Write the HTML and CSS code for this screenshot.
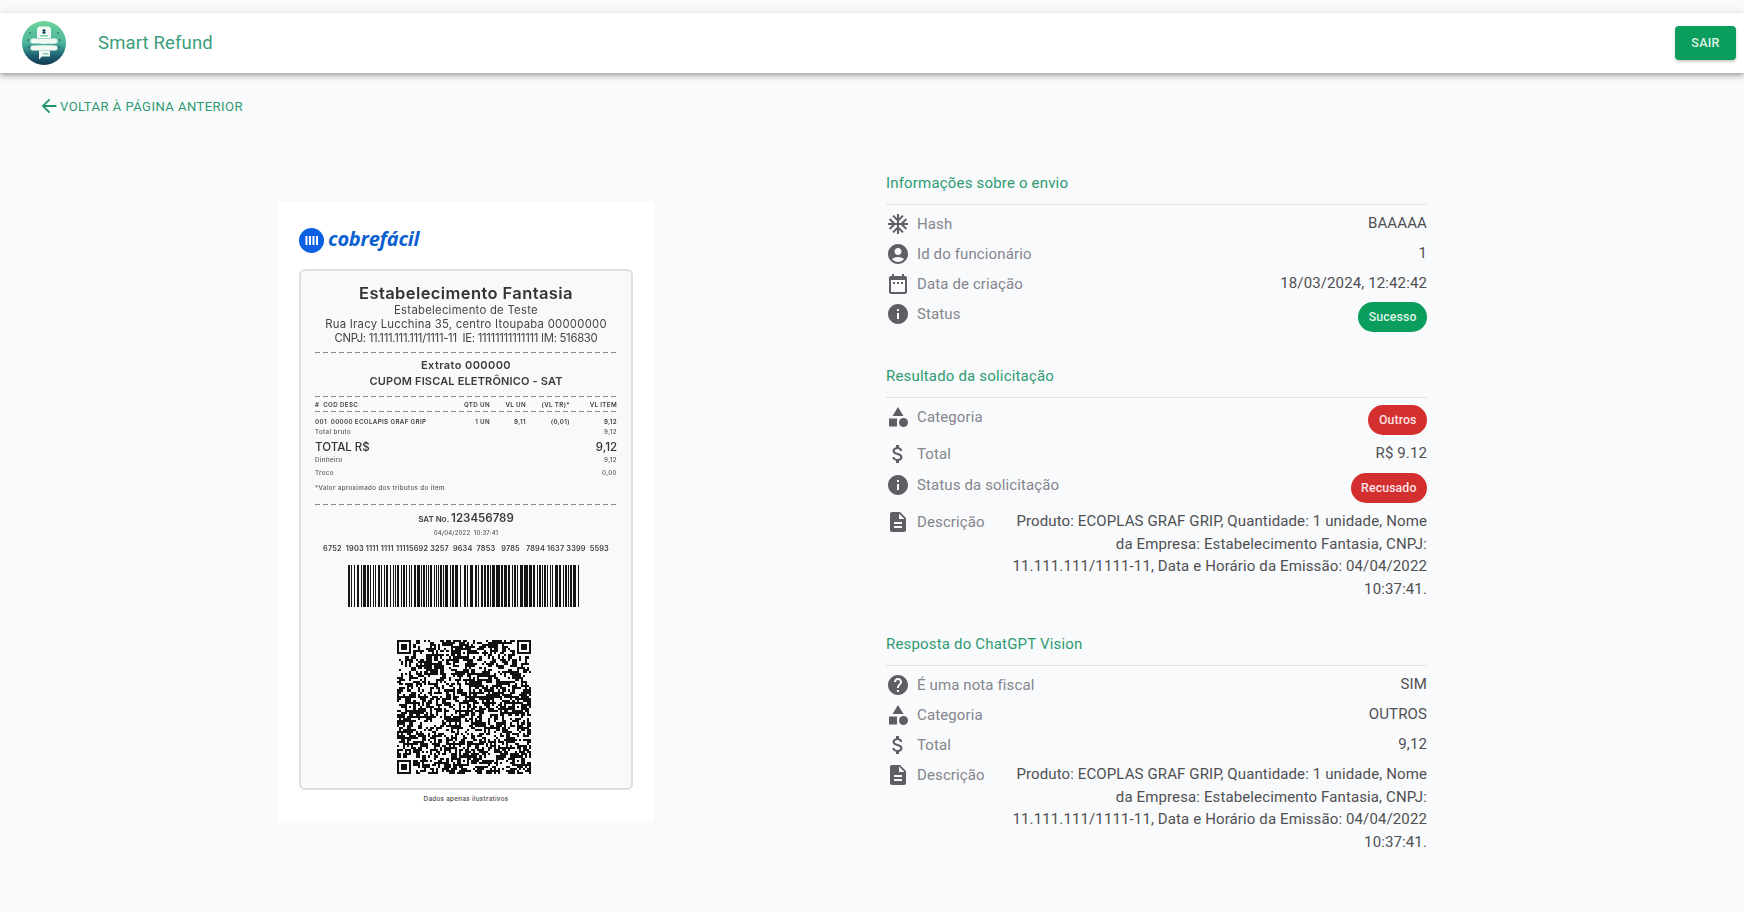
FILE: index.html
```html
<!DOCTYPE html>
<html lang="pt-BR">
<head>
<meta charset="utf-8">
<title>Smart Refund</title>
<link rel="stylesheet" href="styles.css">
</head>
<body>
<svg class="sprite" width="0" height="0" aria-hidden="true">
  <symbol id="i-hash" viewBox="0 0 24 24"><path d="M22 11h-4.17l3.24-3.24-1.41-1.42L15 11h-2V9l4.66-4.66-1.42-1.41L13 6.17V2h-2v4.17L7.76 2.93 6.34 4.34 11 9v2H9L4.34 6.34 2.93 7.76 6.17 11H2v2h4.17l-3.24 3.24 1.41 1.42L9 13h2v2l-4.66 4.66 1.42 1.41L11 17.83V22h2v-4.17l3.24 3.24 1.42-1.41L13 15v-2h2l4.66 4.66 1.41-1.42L17.83 13H22z"/></symbol>
  <symbol id="i-user" viewBox="0 0 24 24"><path d="M12 2C6.48 2 2 6.48 2 12s4.48 10 10 10 10-4.48 10-10S17.52 2 12 2zm0 4c1.93 0 3.5 1.57 3.5 3.5S13.93 13 12 13s-3.5-1.57-3.5-3.5S10.07 6 12 6zm0 14c-2.03 0-4.43-.82-6.14-2.88C7.55 15.8 9.68 15 12 15s4.45.8 6.14 2.12C16.43 19.18 14.03 20 12 20z"/></symbol>
  <symbol id="i-date" viewBox="0 0 24 24"><path d="M19 4h-1V2h-2v2H8V2H6v2H5c-1.11 0-1.99.9-1.99 2L3 20c0 1.1.89 2 2 2h14c1.1 0 2-.9 2-2V6c0-1.1-.9-2-2-2zm0 16H5V8h14v12zM9 12H7v-2h2v2zm4 0h-2v-2h2v2zm4 0h-2v-2h2v2z"/></symbol>
  <symbol id="i-info" viewBox="0 0 24 24"><path d="M12 2C6.48 2 2 6.48 2 12s4.48 10 10 10 10-4.48 10-10S17.52 2 12 2zm1 15h-2v-6h2v6zm0-8h-2V7h2v2z"/></symbol>
  <symbol id="i-cat" viewBox="0 0 24 24"><path d="M12 2l-5.5 9h11z"/><circle cx="17.5" cy="17.5" r="4.5"/><path d="M3 13.5h8v8H3z"/></symbol>
  <symbol id="i-money" viewBox="0 0 24 24"><path d="M11.8 10.9c-2.27-.59-3-1.2-3-2.15 0-1.09 1.01-1.85 2.7-1.85 1.78 0 2.44.85 2.5 2.1h2.21c-.07-1.72-1.12-3.3-3.21-3.81V3h-3v2.16c-1.94.42-3.5 1.68-3.5 3.61 0 2.31 1.91 3.46 4.7 4.13 2.5.6 3 1.48 3 2.41 0 .69-.49 1.79-2.7 1.79-2.06 0-2.87-.92-2.98-2.1h-2.2c.12 2.19 1.76 3.42 3.68 3.83V21h3v-2.15c1.95-.37 3.5-1.5 3.5-3.55 0-2.84-2.43-3.81-4.7-4.4z"/></symbol>
  <symbol id="i-desc" viewBox="0 0 24 24"><path d="M14 2H6c-1.1 0-1.99.9-1.99 2L4 20c0 1.1.89 2 2 2h12c1.1 0 2-.9 2-2V8l-6-6zm2 16H8v-2h8v2zm0-4H8v-2h8v2zm-3-5V3.5L18.5 9H13z"/></symbol>
  <symbol id="i-help" viewBox="0 0 24 24"><path d="M12 2C6.48 2 2 6.48 2 12s4.48 10 10 10 10-4.48 10-10S17.52 2 12 2zm1 17h-2v-2h2v2zm2.07-7.75l-.9.92C13.45 12.9 13 13.5 13 15h-2v-.5c0-1.1.45-2.1 1.17-2.83l1.24-1.26c.37-.36.59-.86.59-1.41 0-1.1-.9-2-2-2s-2 .9-2 2H8c0-2.21 1.79-4 4-4s4 1.79 4 4c0 .88-.36 1.68-.93 2.25z"/></symbol>
</svg>

<header class="topbar">
  <svg class="app-logo" viewBox="0 0 44 44" aria-hidden="true">
    <defs>
      <linearGradient id="logo-bg" x1="0" y1="0" x2="0" y2="1">
        <stop offset="0" stop-color="#6fd39a"/>
        <stop offset=".5" stop-color="#4cb49c"/>
        <stop offset=".78" stop-color="#1f6274"/>
        <stop offset="1" stop-color="#12384c"/>
      </linearGradient>
    </defs>
    <circle cx="22" cy="22" r="22" fill="url(#logo-bg)"/>
    <g fill="#17404f">
      <circle cx="8" cy="12" r=".8"/><circle cx="36" cy="12" r=".8"/>
      <circle cx="6" cy="19" r=".8"/><circle cx="38" cy="19" r=".8"/>
      <circle cx="7" cy="26" r=".8"/><circle cx="37" cy="26" r=".8"/>
    </g>
    <path d="M15 17V9a3.500 3.500 0 0 1 3.500-3.500h7A3.500 3.500 0 0 1 29 9v8z" fill="#f3faf6"/>
    <path d="M21.300 8h1.400v1.200h1.200v1h-1.200v1h1.200v1h-1.200V13h-1.400v-.8h-1.200v-1h1.200v-1h-1.200v-1h1.200z" fill="#17404f"/>
    <rect x="18" y="14" width="8" height="1.500" fill="#7ad0a8"/>
    <path d="M11 17.500h22a2.500 2.500 0 0 1 0 5c-5 .5-17 .5-22 0a2.500 2.500 0 0 1 0-5z" fill="#f3faf6"/>
    <path d="M11 24.500c5-.5 17-.5 22 0a2.500 2.500 0 0 1 0 5H11a2.500 2.500 0 0 1 0-5z" fill="#f3faf6"/>
    <path d="M17 29.500h11v6h-8l-3 3z" fill="#f3faf6"/>
    <rect x="21" y="32" width="5.500" height="1.500" fill="#7ad0a8"/>
  </svg>
  <h1 class="app-title">Smart Refund</h1>
  <button class="logout">SAIR</button>
</header>

<a class="back" href="#">
  <svg class="back-icon" viewBox="0 0 24 24" aria-hidden="true"><path d="M20 11H7.830l5.590-5.590L12 4l-8 8 8 8 1.410-1.410L7.830 13H20v-2z"/></svg>
  VOLTAR À PÁGINA ANTERIOR
</a>

<main class="main">
  <figure class="panel">
    <div class="brand">
      <svg class="brand-mark" viewBox="0 0 25 25" aria-hidden="true">
        <circle cx="12.500" cy="12.500" r="12.500" fill="#0b5fe0"/>
        <path d="M6.500 8h2v9h-2zM10 8h2v9h-2zM13.500 8h2v9h-2zM17 8h2v9h-2z" fill="#fff"/>
      </svg>
      <span class="brand-name">cobrefácil</span>
    </div>
    <div class="receipt">
      <div class="r-title">Estabelecimento Fantasia</div>
      <div class="r-line">Estabelecimento de Teste</div>
      <div class="r-line">Rua Iracy Lucchina 35, centro Itoupaba 00000000</div>
      <div class="r-line r-cnpj">CNPJ: 11.111.111.111/1111-11&nbsp; IE: 11111111111111 IM: 516830</div>
      <div class="dash dash-a"></div>
      <div class="r-strong r-extrato">Extrato 000000</div>
      <div class="r-strong r-cupom">CUPOM FISCAL ELETRÔNICO - SAT</div>
      <div class="dash dash-b"></div>
      <div class="r-cols r-head"><span>#&nbsp; COD DESC</span><span>QTD UN</span><span>VL UN</span><span>(VL TR)*</span><span>VL ITEM</span></div>
      <div class="dash dash-c"></div>
      <div class="r-cols r-item"><span>001&nbsp; 00000 ECOLAPIS GRAF GRIP</span><span>1 UN</span><span>9,11</span><span>(0,01)</span><span>9,12</span></div>
      <div class="r-pair"><span>Total bruto</span><span>9,12</span></div>
      <div class="r-pair r-total"><span>TOTAL R$</span><span>9,12</span></div>
      <div class="r-pair"><span>Dinheiro</span><span>9,12</span></div>
      <div class="r-pair r-troco"><span>Troco</span><span>0,00</span></div>
      <div class="r-pair r-note"><span>*Valor aproximado dos tributos do item</span></div>
      <div class="dash dash-d"></div>
      <div class="r-sat">SAT No. <b>123456789</b></div>
      <div class="r-date">04/04/2022&nbsp; 10:37:41</div>
      <div class="r-digits">6752&nbsp; 1903 1111 1111 11115692 3257&nbsp; 9634&nbsp; 7853&nbsp; &nbsp;9785&nbsp; &nbsp;7894 1637 3399&nbsp; 5593</div>
      <svg class="barcode" viewBox="0 0 231 42" preserveAspectRatio="none" aria-hidden="true">
        <line x1="0" y1="21" x2="231" y2="21" stroke="#141414" stroke-width="42" stroke-dasharray="2 1 1 2 1 2 2 2 1 1 3 1 2 1 1 2 1 1 1 2 2 1 1 2 1 1 2 2 1 2 1 1 1 1 2 2 1 1 2 1 1 2 1 1 1 2 2 1 3 1 1 1 2 1 1 1 1 1 2 2 1 1 1 1 1 1 2 1 1 1 3 2 1 1 2 1 3 2 1 3 2 1 1 2 3 2 2 1 1 2 2 1 2 1 2 1 1 1 3 1 4 1 2 1 3 1 2 2 1 1 2 1 1 2 3 1 4 1 3 1 2 2 1 1 2 1 1 1 2 1 1 2 1 1 1 2 3 1 2 2 1 1 2 1 1 1 2 1 3 2"/>
      </svg>
      <svg class="qr" id="qr" viewBox="0 0 65 65" shape-rendering="crispEdges" aria-hidden="true"></svg>
    </div>
    <figcaption class="caption">Dados apenas ilustrativos</figcaption>
  </figure>

  <div class="details">
    <section class="section">
      <h2 class="section-title">Informações sobre o envio</h2>
      <div class="row"><div class="label"><svg class="icon"><use href="#i-hash"/></svg>Hash</div><div class="value">BAAAAA</div></div>
      <div class="row"><div class="label"><svg class="icon"><use href="#i-user"/></svg>Id do funcionário</div><div class="value">1</div></div>
      <div class="row"><div class="label"><svg class="icon"><use href="#i-date"/></svg>Data de criação</div><div class="value">18/03/2024, 12:42:42</div></div>
      <div class="row row-chip"><div class="label"><svg class="icon"><use href="#i-info"/></svg>Status</div><span class="chip chip-ok">Sucesso</span></div>
    </section>

    <section class="section">
      <h2 class="section-title">Resultado da solicitação</h2>
      <div class="row row-chip"><div class="label"><svg class="icon"><use href="#i-cat"/></svg>Categoria</div><span class="chip chip-bad">Outros</span></div>
      <div class="row row-tight"><div class="label"><svg class="icon"><use href="#i-money"/></svg>Total</div><div class="value">R$ 9.12</div></div>
      <div class="row row-chip"><div class="label"><svg class="icon"><use href="#i-info"/></svg>Status da solicitação</div><span class="chip chip-bad">Recusado</span></div>
      <div class="row"><div class="label"><svg class="icon"><use href="#i-desc"/></svg>Descrição</div><div class="value value-long">Produto: ECOPLAS GRAF GRIP, Quantidade: 1 unidade, Nome da Empresa: Estabelecimento Fantasia, CNPJ: 11.111.111/1111-11, Data e Horário da Emissão: 04/04/2022 10:37:41.</div></div>
    </section>

    <section class="section">
      <h2 class="section-title">Resposta do ChatGPT Vision</h2>
      <div class="row"><div class="label"><svg class="icon"><use href="#i-help"/></svg>É uma nota fiscal</div><div class="value">SIM</div></div>
      <div class="row"><div class="label"><svg class="icon"><use href="#i-cat"/></svg>Categoria</div><div class="value">OUTROS</div></div>
      <div class="row"><div class="label"><svg class="icon"><use href="#i-money"/></svg>Total</div><div class="value">9,12</div></div>
      <div class="row"><div class="label"><svg class="icon"><use href="#i-desc"/></svg>Descrição</div><div class="value value-long">Produto: ECOPLAS GRAF GRIP, Quantidade: 1 unidade, Nome da Empresa: Estabelecimento Fantasia, CNPJ: 11.111.111/1111-11, Data e Horário da Emissão: 04/04/2022 10:37:41.</div></div>
    </section>
  </div>
</main>
<script src="qr.js"></script>
</body>
</html>
```
FILE: styles.css
```css
* { box-sizing: border-box; }
html, body { margin: 0; padding: 0; }
body {
  background: #f8fafc;
  font-family: Roboto, "Liberation Sans", sans-serif;
  color: #4d4d4f;
  padding-top: 13px;
  min-height: 912px;
}
.sprite { position: absolute; }

.topbar {
  height: 60px;
  background: #fff;
  display: flex;
  align-items: center;
  padding: 0 8px 0 22px;
  box-shadow: 0 2px 4px -1px rgba(0,0,0,.2), 0 4px 5px 0 rgba(0,0,0,.14), 0 1px 10px 0 rgba(0,0,0,.12);
}
.app-logo { width: 44px; height: 44px; flex: none; }
.app-title {
  margin: 0 0 0 32px;
  font-size: 18.500px;
  font-weight: 400;
  letter-spacing: .15px;
  color: #3b9d78;
  flex: 1;
}
.logout {
  width: 61px;
  height: 34px;
  padding: 0 0 2px;
  border: 0;
  border-radius: 4px;
  background: #0a9d5c;
  color: #dff3e9;
  font: 500 12.500px Roboto, sans-serif;
  letter-spacing: .3px;
  box-shadow: 0 2px 3px rgba(0,0,0,.2);
}

.back {
  display: flex;
  align-items: center;
  height: 24px;
  margin: 21px 0 0 38px;
  font-size: 13px;
  font-weight: 400;
  letter-spacing: .48px;
  color: #2f9a72;
  text-decoration: none;
}
.back-icon { width: 22px; height: 22px; fill: #1f9468; margin-right: 0; }

.main { display: flex; align-items: flex-start; padding: 53px 0 0 278px; }

.panel {
  margin: 31px 0 0;
  width: 376px;
  height: 619px;
  padding: 26px 21px 0;
  background: #fff;
}
.brand { display: flex; align-items: center; height: 25px; margin-bottom: 16px; }
.brand-mark { width: 25px; height: 25px; flex: none; }
.brand-name {
  margin: -4px 0 0 4px;
  font: italic 700 20px "Open Sans", sans-serif;
  color: #0b5fd0;
  letter-spacing: -.25px;
}

.receipt {
  height: 521px;
  padding: 12px 14px 0;
  background: #f9f9f9;
  border: 2px solid #dedede;
  border-radius: 6px;
  font-family: Inter, "Noto Sans", sans-serif;
  color: #3c3c3c;
  text-align: center;
  filter: blur(.3px);
}
.r-title { font-size: 16.500px; font-weight: 600; line-height: 20px; letter-spacing: .4px; color: #333; }
.r-line { font-size: 11.300px; line-height: 14px; letter-spacing: .27px; color: #444; white-space: nowrap; }
.r-cnpj { letter-spacing: -.28px; }
.r-strong { font-size: 11px; font-weight: 600; line-height: 14px; }
.r-extrato { margin-top: 5px; letter-spacing: .4px; }
.r-cupom { margin-top: 2px; letter-spacing: .16px; }

.dash {
  height: 1px;
  background: repeating-linear-gradient(90deg, #8a8a8a 0 5px, transparent 5px 8px);
}
.dash-a { margin-top: 7px; }
.dash-b { margin-top: 8px; }
.dash-c { margin-top: 1px; }
.dash-d { margin-top: 11px; }

.r-cols {
  display: grid;
  grid-template-columns: 1fr 40px 36px 44px 47px;
  font-size: 6.200px;
  font-weight: 600;
  line-height: 10px;
  letter-spacing: .36px;
  text-align: right;
  white-space: nowrap;
}
.r-cols span:first-child { text-align: left; }
.r-head { margin-top: 3px; }
.r-item { margin-top: 5px; }
.r-pair {
  display: flex;
  justify-content: space-between;
  font-size: 6.200px;
  font-weight: 500;
  line-height: 10px;
  letter-spacing: .38px;
  color: #555;
}
.r-total { margin-top: 2px; font-size: 11.500px; font-weight: 500; line-height: 16px; letter-spacing: 0; color: #333; }
.r-troco { margin-top: 3px; }
.r-note { margin-top: 5px; }

.r-sat { margin-top: 4px; font-size: 8px; font-weight: 600; line-height: 18px; }
.r-sat b { font-size: 11.500px; font-weight: 600; }
.r-date { font-size: 6px; font-weight: 500; line-height: 10px; letter-spacing: .15px; color: #555; }
.r-digits { margin-top: 6px; font-size: 7.300px; font-weight: 600; line-height: 10px; letter-spacing: .18px; white-space: nowrap; }

.barcode { display: block; width: 231px; height: 42px; margin: 11px 0 0 33px; }
.qr { display: block; width: 134px; height: 134px; margin: 33px 0 0 82px; filter: blur(.35px); }

.caption {
  margin-top: 4px;
  font: 500 6.300px/10px Inter, sans-serif;
  letter-spacing: .3px;
  color: #444;
  text-align: center;
}

.details { width: 541px; margin-left: 232px; }
.section { margin-bottom: 28px; }
.section-title {
  margin: 0 0 4px;
  padding-bottom: 9px;
  border-bottom: 1px solid #e0e3e6;
  font-size: 15px;
  font-weight: 400;
  line-height: 24px;
  letter-spacing: .18px;
  color: #2f9a72;
}
.row {
  display: flex;
  justify-content: space-between;
  align-items: flex-start;
  min-height: 30px;
  font-size: 15px;
  letter-spacing: .12px;
}
.row-chip { min-height: 37px; }
.row-tight { min-height: 31px; }
.label {
  display: flex;
  align-items: center;
  height: 29px;
  color: #85858c;
  white-space: nowrap;
}
.icon { width: 24px; height: 24px; fill: #5e5f63; margin-right: 7px; flex: none; }
.value { line-height: 29px; color: #505052; text-align: right; }
.value-long { width: 420px; line-height: 22.500px; padding: 3px 0 4px; }
.chip {
  display: flex;
  align-items: center;
  height: 30px;
  margin-top: 2.500px;
  padding: 0 10.500px;
  border-radius: 15px;
  font-size: 12.300px;
  font-weight: 500;
  letter-spacing: .12px;
}
.chip-ok { background: #0a9d5c; color: #dff5ea; }
.chip-bad { background: #d32f2f; color: #fde3e3; }
```
FILE: qr.js
```js
(function () {
  var N = 65, svg = document.getElementById('qr'), seed = 20240318;
  function rnd() {
    seed = (seed * 1664525 + 1013904223) >>> 0;
    return (seed >>> 16) / 65536;
  }
  var grid = [];
  for (var y = 0; y < N; y++) {
    grid.push([]);
    for (var x = 0; x < N; x++) {
      var left = x > 0 ? grid[y][x - 1] : 0;
      var up = y > 0 ? grid[y - 1][x] : 0;
      grid[y].push(rnd() < 0.38 + 0.14 * (left + up) ? 1 : 0);
    }
  }
  function square(cx, cy, outer, ring, core) {
    for (var j = -outer; j <= outer; j++) {
      for (var i = -outer; i <= outer; i++) {
        var d = Math.max(Math.abs(i), Math.abs(j));
        var px = cx + i, py = cy + j;
        if (px < 0 || py < 0 || px >= N || py >= N) continue;
        grid[py][px] = d === ring || d <= core ? 1 : 0;
      }
    }
  }
  square(3, 3, 4, 3, 1);
  square(61, 3, 4, 3, 1);
  square(3, 61, 4, 3, 1);
  [[32, 6], [6, 32], [32, 32], [58, 32], [32, 58], [58, 58]].forEach(function (p) {
    square(p[0], p[1], 2, 2, 0);
  });
  var d = '';
  for (var r = 0; r < N; r++) {
    for (var c = 0; c < N; c++) {
      if (grid[r][c]) d += 'M' + c + ' ' + r + 'h1v1h-1z';
    }
  }
  var path = document.createElementNS('http://www.w3.org/2000/svg', 'path');
  path.setAttribute('d', d);
  path.setAttribute('fill', '#111');
  svg.appendChild(path);
})();
```
